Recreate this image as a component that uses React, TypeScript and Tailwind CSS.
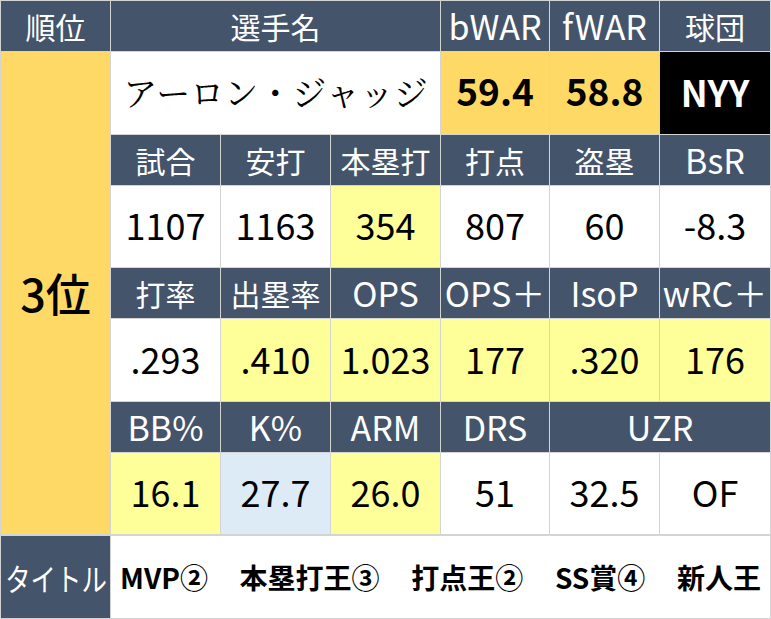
const HEAD = "bg-[#44546a] text-white";
const GOLD = "bg-[#ffd966]";
const PALE = "bg-[#ffff99]";
const BLUE = "bg-[#ddebf7]";

type Cell = { text: string; bg?: string };

// Latin labels are drawn a bit larger than the kanji ones in the sheet
function HeaderCell({ text, latin = false, className = "" }: { text: string; latin?: boolean; className?: string }) {
  return (
    <div
      className={`${HEAD} flex items-center justify-center leading-none ${latin ? "text-[34px]" : "text-[30px]"} ${className}`}
    >
      {text}
    </div>
  );
}

function ValueCell({ text, bg = "bg-white", className = "" }: { text: string; bg?: string; className?: string }) {
  return (
    <div className={`${bg} flex items-center justify-center pb-[5px] text-[36px] leading-none text-black ${className}`}>
      {text}
    </div>
  );
}

const rows: { heads: { text: string; latin?: boolean }[]; values: Cell[] }[] = [
  {
    heads: [
      { text: "試合" },
      { text: "安打" },
      { text: "本塁打" },
      { text: "打点" },
      { text: "盗塁" },
      { text: "BsR", latin: true },
    ],
    values: [
      { text: "1107" },
      { text: "1163" },
      { text: "354", bg: PALE },
      { text: "807" },
      { text: "60" },
      { text: "-8.3" },
    ],
  },
  {
    heads: [
      { text: "打率" },
      { text: "出塁率" },
      { text: "OPS", latin: true },
      { text: "OPS＋", latin: true },
      { text: "IsoP", latin: true },
      { text: "wRC＋", latin: true },
    ],
    values: [
      { text: ".293" },
      { text: ".410", bg: PALE },
      { text: "1.023", bg: PALE },
      { text: "177", bg: PALE },
      { text: ".320", bg: PALE },
      { text: "176", bg: PALE },
    ],
  },
];

const titles = ["MVP②", "本塁打王③", "打点王②", "SS賞④", "新人王"];

export default function App() {
  return (
    <div
      className="w-[771px] h-[619px] bg-[#d4d4d4] p-px"
      style={{ fontFamily: '"Noto Sans CJK JP", "Noto Sans", sans-serif' }}
    >
      <div className="grid grid-cols-[109px_109px_109px_109px_108px_109px_1fr] grid-rows-[50px_82px_50px_81px_50px_82px_50px_81px] gap-px">
        <HeaderCell text="順位" />
        <HeaderCell text="選手名" className="col-span-3" />
        <HeaderCell text="bWAR" latin />
        <HeaderCell text="fWAR" latin />
        <HeaderCell text="球団" />

        <div className={`${GOLD} row-span-7 flex items-center justify-center pb-[2px] text-[45px] font-medium leading-none text-black`}>
          3位
        </div>
        <div
          className="col-span-3 flex items-center justify-center bg-white pb-[2px] text-[34px] leading-none text-black"
          style={{ fontFamily: '"Noto Serif CJK JP", "Liberation Serif", serif' }}
        >
          アーロン・ジャッジ
        </div>
        <ValueCell text="59.4" bg={GOLD} className="font-bold !text-[37px]" />
        <ValueCell text="58.8" bg={GOLD} className="font-bold !text-[37px]" />
        <ValueCell text="NYY" bg="bg-black" className="font-bold !text-white" />

        {rows.map((row, i) => (
          <div key={i} className="contents">
            {row.heads.map((h) => (
              <HeaderCell key={h.text} text={h.text} latin={h.latin} />
            ))}
            {row.values.map((v, j) => (
              <ValueCell key={j} text={v.text} bg={v.bg} />
            ))}
          </div>
        ))}

        <HeaderCell text="BB%" latin />
        <HeaderCell text="K%" latin />
        <HeaderCell text="ARM" latin />
        <HeaderCell text="DRS" latin />
        <HeaderCell text="UZR" latin className="col-span-2" />
        <ValueCell text="16.1" bg={PALE} />
        <ValueCell text="27.7" bg={BLUE} />
        <ValueCell text="26.0" bg={PALE} />
        <ValueCell text="51" />
        <ValueCell text="32.5" />
        <ValueCell text="OF" />
      </div>

      <div className="mt-[2px] flex h-[82px] gap-px">
        <div className={`${HEAD} flex w-[109px] items-center justify-center overflow-hidden`}>
          <span className="inline-block scale-x-[0.82] whitespace-nowrap text-[31px] leading-none">タイトル</span>
        </div>
        <div className="flex flex-1 items-center justify-between bg-white px-[9px] text-[28px] font-bold leading-none text-black">
          {titles.map((t) => (
            <span key={t} className="whitespace-nowrap">{t}</span>
          ))}
        </div>
      </div>
    </div>
  );
}
